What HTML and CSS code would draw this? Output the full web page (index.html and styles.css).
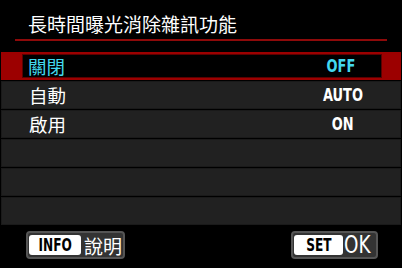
FILE: index.html
```html
<!DOCTYPE html>
<html lang="zh-Hant">
<head>
<meta charset="utf-8">
<link rel="stylesheet" href="styles.css">
</head>
<body>
<div class="screen">
  <div class="title">長時間曝光消除雜訊功能</div>
  <div class="rule"></div>
  <div class="list">
    <div class="row selected"><div class="inner"><span class="label">關閉</span><span class="value"><span class="vtxt">OFF</span></span></div></div>
    <div class="row"><div class="inner"><span class="label">自動</span><span class="value"><span class="vtxt">AUTO</span></span></div></div>
    <div class="row"><div class="inner"><span class="label">啟用</span><span class="value"><span class="vtxt">ON</span></span></div></div>
    <div class="row"></div>
    <div class="row"></div>
    <div class="row"></div>
  </div>
  <div class="footer">
    <div class="btn info"><span class="key"><span class="ktxt">INFO</span></span><span class="btn-text">說明</span></div>
    <div class="btn set"><span class="key"><span class="ktxt">SET</span></span><span class="btn-text ok"><span class="oktxt">OK</span></span></div>
  </div>
</div>
</body>
</html>
```
FILE: styles.css
```css
html, body {
  margin: 0;
  padding: 0;
  background: #000;
}
.screen {
  width: 402px;
  height: 268px;
  background: #000;
  overflow: hidden;
  font-family: "Noto Sans CJK TC", "Noto Sans", sans-serif;
  color: #fff;
}
.title {
  padding-left: 28px;
  font-size: 19px;
  line-height: 48px;
  height: 39px;
}
.rule {
  margin: 0 15px;
  height: 2px;
  background: #8e0a0a;
}
.list {
  margin-top: 11px;
  display: flex;
  flex-direction: column;
  gap: 1px;
  padding: 0 1px;
  background: #000;
}
.row {
  height: 28px;
  background: #212121;
  box-sizing: border-box;
  border: 1px solid #1a1a1a;
}
.row .inner {
  margin-left: 21px;
  width: 360px;
  height: 100%;
  display: flex;
  align-items: center;
  justify-content: space-between;
  box-sizing: border-box;
  padding-left: 6px;
}
.row.selected {
  background: #9c0000;
  border-color: #9c0000;
  padding: 1px 0;
}
.row.selected .inner {
  background: #000;
  border: 1px solid #5a0000;
  padding-left: 5px;
  margin-left: 20px;
}
.label {
  font-size: 18.5px;
  line-height: 1;
}
.value {
  width: 80px;
  display: flex;
  justify-content: center;
  font-family: "DejaVu Sans Condensed", "DejaVu Sans", sans-serif;
  font-weight: bold;
  font-size: 18px;
  line-height: 1;
}
.vtxt {
  display: inline-block;
  transform: scaleX(0.8);
}
.selected .label, .selected .value {
  color: #43d8ef;
}
.footer {
  display: flex;
  justify-content: space-between;
  padding: 6px 24px 0 26px;
}
.btn {
  display: flex;
  align-items: center;
  height: 28px;
  box-sizing: border-box;
  border: 2px solid #555;
  border-radius: 4px;
  background: #333;
  padding: 0 1px;
}
.btn.info { width: 99px; }
.btn.set { width: 87px; }
.key {
  background: #fff;
  color: #000;
  border-radius: 3px;
  height: 20px;
  display: flex;
  align-items: center;
  justify-content: center;
  font-family: "DejaVu Sans Condensed", "DejaVu Sans", sans-serif;
  font-weight: bold;
  font-size: 18px;
  line-height: 1;
}
.ktxt {
  display: inline-block;
  transform: scaleX(0.75);
}
.info .key { width: 52px; }
.set .key { width: 52px; }
.btn-text {
  font-size: 19px;
  margin-left: 3px;
  line-height: 1;
}
.ok {
  font-family: "DejaVu Sans Condensed", "DejaVu Sans", sans-serif;
  font-size: 24px;
  margin-left: 1px;
}
.oktxt {
  display: inline-block;
  transform: scaleX(0.85);
  transform-origin: left center;
}
```
